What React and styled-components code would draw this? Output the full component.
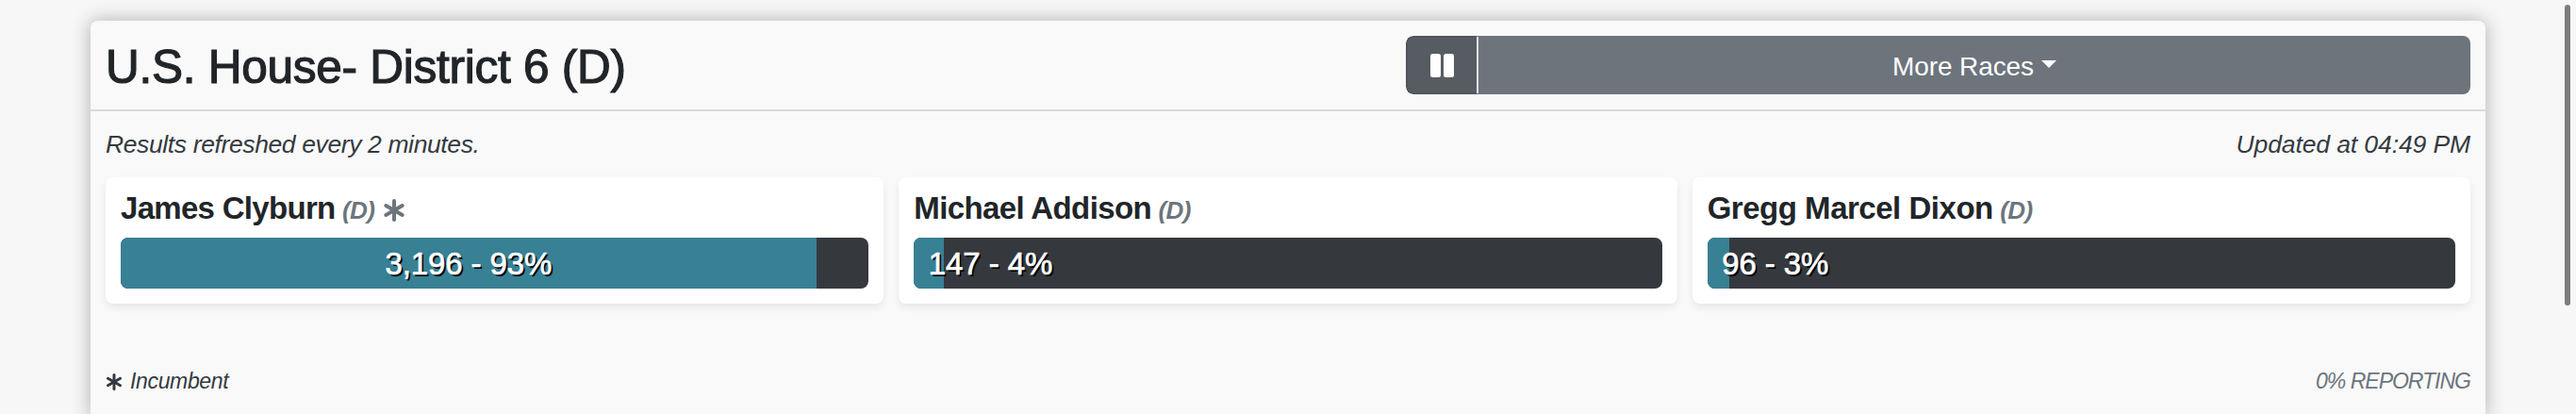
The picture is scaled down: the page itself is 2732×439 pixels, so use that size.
import React from "react"
import styled, { createGlobalStyle } from 'styled-components'

const GlobalStyle = createGlobalStyle`
    * {
        box-sizing: border-box;
    }
    body {
        margin: 0;
        background-color: #f7f7f7;
        color: #212529;
        font-family: 'Liberation Sans', Arial, sans-serif;
    }
`

const PageDiv = styled.div`
    display: flex;
    justify-content: space-between;
    height: 439px;
    overflow: hidden;
    padding: 0 6px 0 96px;
`

const PanelDiv = styled.div`
    width: 2540px;
    height: 422px;
    margin-top: 22px;
    background-color: #f9f9f9;
    border-radius: 8px;
    box-shadow: 0 0 20px rgba(0, 0, 0, 0.3);
`

const HeaderDiv = styled.div`
    display: flex;
    justify-content: space-between;
    align-items: center;
    height: 96px;
    padding: 0 16px;
    border-bottom: 2px solid #d9d9d9;
`

const H1 = styled.h1`
    margin: 0;
    padding-top: 3px;
    font-size: 49.5px;
    font-weight: normal;
    line-height: 60px;
    letter-spacing: -0.25px;
    -webkit-text-stroke: 1.2px #212529;
`

const ButtonGroup = styled.div`
    display: flex;
    width: 1129px;
    height: 62px;
    border-radius: 8px;
    overflow: hidden;
`

const Button = styled.button`
    display: flex;
    justify-content: center;
    align-items: center;
    margin: 0;
    padding: 0;
    border: none;
    font-family: inherit;
    color: white;
`

const PauseButton = styled(Button)`
    width: 75px;
    gap: 3px;
    background-color: #565c62;
    border: solid #4f555b;
    border-width: 2px 0 2px 2px;
    border-radius: 8px 0 0 8px;
`

const PauseBar = styled.span`
    width: 11px;
    height: 25px;
    border-radius: 2.5px;
    background-color: white;
`

const Divider = styled.div`
    width: 2px;
    background-color: #dee2e6;
    border: solid #6d757c;
    border-width: 1px 0;
`

const RacesButton = styled(Button)`
    flex: 1;
    gap: 8px;
    background-color: #6d747c;
    font-size: 28px;
`

const RacesText = styled.span`
    padding-top: 3px;
    line-height: 32px;
    letter-spacing: -0.1px;
`

const Caret = styled.span`
    margin-bottom: 2px;
    border-top: 8px solid white;
    border-left: 8px solid transparent;
    border-right: 8px solid transparent;
`

const StatusDiv = styled.div`
    display: flex;
    justify-content: space-between;
    align-items: center;
    height: 70px;
    padding: 0 16px;
    font-size: 26.5px;
    font-style: italic;
    color: #343a40;
`

const StatusText = styled.span`
    letter-spacing: ${props => props.$tracking}px;
`

const CardsDiv = styled.div`
    display: grid;
    grid-template-columns: repeat(3, 1fr);
    gap: 16px;
    padding: 0 16px;
`

const Card = styled.div`
    height: 134px;
    padding: 16px;
    background-color: white;
    border-radius: 8px;
    box-shadow: 0 4px 8px rgba(0, 0, 0, 0.075);
`

const NameDiv = styled.div`
    display: flex;
    align-items: baseline;
    height: 34px;
    margin-bottom: 14px;
    line-height: 34px;
    font-size: 33px;
    font-weight: bold;
    letter-spacing: ${props => props.$tracking}px;
`

const Party = styled.span`
    margin-left: 7.5px;
    font-size: 26px;
    font-style: italic;
    letter-spacing: -0.6px;
    color: #6c757d;
`

const Star = styled.svg`
    width: ${props => props.$size}px;
    height: ${props => props.$size}px;
    stroke: currentColor;
    stroke-width: 4;
    stroke-linecap: round;
`

const NameStar = styled(Star)`
    align-self: center;
    margin: 4px 0 0 9px;
    color: #6c757d;
`

const Progress = styled.div`
    height: 54px;
    border-radius: 8px;
    overflow: hidden;
    background-color: #35393e;
`

const ProgressFill = styled.div`
    display: flex;
    justify-content: ${props => props.$short ? 'flex-start' : 'center'};
    align-items: center;
    height: 54px;
    padding-left: ${props => props.$short ? 15.5 : 0}px;
    background-color: #388094;
`

const Votes = styled.span`
    padding-top: 1px;
    color: white;
    font-size: 33px;
    white-space: nowrap;
    letter-spacing: -0.1px;
    text-shadow: 2px 2px 0 black;
    -webkit-text-stroke: 0.7px white;
`

const FooterDiv = styled.div`
    display: flex;
    justify-content: space-between;
    align-items: center;
    height: 32px;
    margin-top: 66px;
    padding: 0 16px;
    font-size: 23px;
    font-style: italic;
    color: #343a40;
`

const Incumbent = styled.span`
    display: flex;
    align-items: center;
    gap: 8px;
    padding-top: 1px;
    letter-spacing: -0.35px;
`

const Reporting = styled.span`
    padding-top: 1px;
    color: #6c757d;
    letter-spacing: -1px;
`

const ScrollThumb = styled.div`
    width: 6px;
    height: 319px;
    margin-top: 5px;
    border-radius: 3px;
    background-color: #7d7d7d;
`

const candidates = [
    { name: 'James Clyburn', party: 'D', incumbent: true, votes: '3,196', percent: 93, tracking: -0.7 },
    { name: 'Michael Addison', party: 'D', votes: '147', percent: 4, tracking: -0.62 },
    { name: 'Gregg Marcel Dixon', party: 'D', votes: '96', percent: 3, tracking: -0.48 },
]

function StarLines (){
    return (
        <>
            <line x1="12" y1="2" x2="12" y2="22" />
            <line x1="3.3" y1="7" x2="20.7" y2="17" />
            <line x1="20.7" y1="7" x2="3.3" y2="17" />
        </>
    )
}

function Candidate ({ name, party, incumbent, votes, percent, tracking }){
    return (
        <Card>
            <NameDiv $tracking={tracking}>
                <span>{name}</span>
                <Party>({party})</Party>
                {incumbent && <NameStar $size={24} viewBox="0 0 24 24"><StarLines /></NameStar>}
            </NameDiv>
            <Progress>
                <ProgressFill $short={percent < 20} style={{ width: `${percent}%` }}>
                    <Votes>{votes} - {percent}%</Votes>
                </ProgressFill>
            </Progress>
        </Card>
    )
}

function App (){

return (
    <PageDiv>
        <GlobalStyle />
        <PanelDiv>
            <HeaderDiv>
                <H1>U.S. House- District 6 (D)</H1>
                <ButtonGroup>
                    <PauseButton aria-label="Pause">
                        <PauseBar />
                        <PauseBar />
                    </PauseButton>
                    <Divider />
                    <RacesButton>
                        <RacesText>More Races</RacesText>
                        <Caret />
                    </RacesButton>
                </ButtonGroup>
            </HeaderDiv>
            <StatusDiv>
                <StatusText $tracking={-0.38}>Results refreshed every 2 minutes.</StatusText>
                <StatusText $tracking={-0.1}>Updated at 04:49 PM</StatusText>
            </StatusDiv>
            <CardsDiv>
                {candidates.map(candidate => <Candidate key={candidate.name} {...candidate} />)}
            </CardsDiv>
            <FooterDiv>
                <Incumbent>
                    <Star $size={18} viewBox="0 0 24 24"><StarLines /></Star>
                    Incumbent
                </Incumbent>
                <Reporting>0% REPORTING</Reporting>
            </FooterDiv>
        </PanelDiv>
        <ScrollThumb />
    </PageDiv>
)

}

export default App
